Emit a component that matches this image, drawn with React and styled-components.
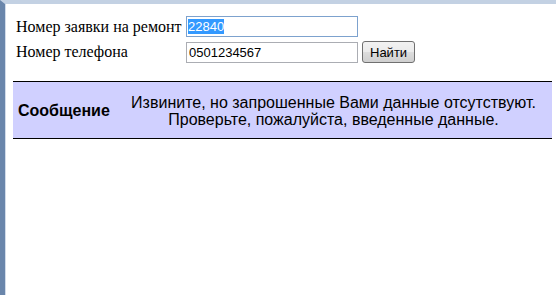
import React from "react";
import styled, { createGlobalStyle } from "styled-components";

const GlobalStyle = createGlobalStyle`
  html, body {
    margin: 0;
    padding: 0;
    background: #ffffff;
  }
  body {
    width: 556px;
    height: 295px;
    overflow: hidden;
  }
`;

const Frame = styled.div`
  height: 295px;
  box-sizing: border-box;
  border-top: 4px solid #c3d1e3;
  border-left: 5px solid #6a86ab;
  box-shadow: inset 1px 0 0 #d2dcea;
  background: #ffffff;
`;

const Form = styled.form`
  display: grid;
  grid-template-columns: 167px auto auto;
  justify-content: start;
  align-items: center;
  row-gap: 4px;
  column-gap: 3px;
  padding: 12px 0 0 11px;
  font-family: "Liberation Serif", "Times New Roman", serif;
  font-size: 16px;
  color: #000;
`;

const Label = styled.label`
  line-height: 18px;
  white-space: nowrap;
`;

const Field = styled.div`
  width: 172px;
  height: 21px;
  box-sizing: border-box;
  padding: 2px 1px;
  border: 1px solid ${(p) => (p.$focused ? "#7da2ce" : "#abadb3")};
  font-family: "Liberation Sans", Arial, sans-serif;
  font-size: 13px;
  line-height: 15px;
  color: #000;
  background: #fff;
`;

const Input = styled.input`
  width: 172px;
  height: 21px;
  box-sizing: border-box;
  margin: 0;
  padding: 1px 2px;
  border: 1px solid #abadb3;
  font-family: "Liberation Sans", Arial, sans-serif;
  font-size: 13px;
  color: #000;
  outline: none;
`;

const Selected = styled.span`
  background: #3399ff;
  color: #fff;
`;

const Button = styled.button`
  height: 22px;
  padding: 0 7px;
  margin: 0 0 0 1px;
  border: 1px solid #707070;
  border-radius: 3px;
  background: linear-gradient(#f2f2f2 0%, #ebebeb 50%, #dddddd 51%, #cfcfcf 100%);
  font-family: "Liberation Sans", Arial, sans-serif;
  font-size: 13px;
  color: #000;
`;

const MessageTable = styled.div`
  display: grid;
  grid-template-columns: 104px 1fr;
  align-items: center;
  margin: 18px 4px 0 8px;
  height: 58px;
  box-sizing: border-box;
  border-top: 1px solid #000;
  border-bottom: 1px solid #000;
  background: #d0d0ff;
  font-family: "Liberation Sans", Arial, sans-serif;
  font-size: 16px;
  line-height: 17px;
  color: #000;
`;

const Caption = styled.div`
  font-weight: bold;
  padding-left: 5px;
`;

const Text = styled.div`
  text-align: center;
  padding: 1px 2px 0 0;
`;

export default function App() {
  return (
    <>
      <GlobalStyle />
      <Frame>
        <Form onSubmit={(e) => e.preventDefault()}>
          <Label>Номер заявки на ремонт</Label>
          <Field $focused>
            <Selected>22840</Selected>
          </Field>
          <span />
          <Label>Номер телефона</Label>
          <Input type="text" defaultValue="0501234567" />
          <Button type="submit">Найти</Button>
        </Form>
        <MessageTable>
          <Caption>Сообщение</Caption>
          <Text>
            Извините, но запрошенные Вами данные отсутствуют.
            <br />
            Проверьте, пожалуйста, введенные данные.
          </Text>
        </MessageTable>
      </Frame>
    </>
  );
}
